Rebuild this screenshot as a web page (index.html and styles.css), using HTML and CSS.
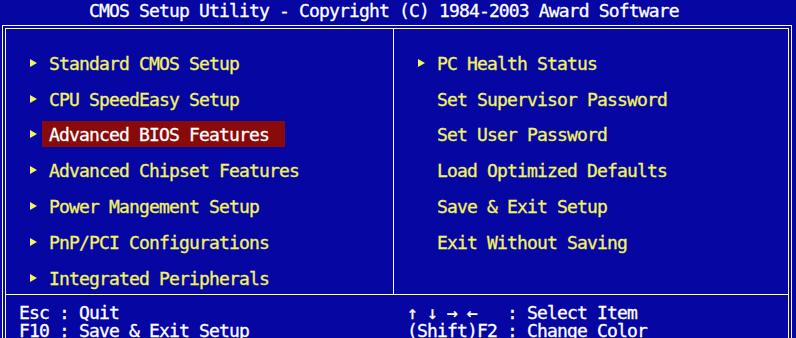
FILE: index.html
```html
<!DOCTYPE html>
<html lang="en">
<head>
    <meta charset="UTF-8">
    <meta name="viewport" content="width=device-width, initial-scale=1.0">
    <title>CMOS Setup Utility</title>
    <link rel="stylesheet" href="styles.css">
</head>
<body>
    <div class="title">CMOS Setup Utility - Copyright (C) 1984-2003 Award Software</div>

    <div class="frame">
        <div class="panel">
            <div class="menus">
                <!-- left menu -->
                <ul class="menu menu-left">
                    <li class="item"><span class="arrow"></span><span class="label">Standard CMOS Setup</span></li>
                    <li class="item"><span class="arrow"></span><span class="label">CPU SpeedEasy Setup</span></li>
                    <li class="item selected"><span class="arrow"></span><span class="label">Advanced BIOS Features</span></li>
                    <li class="item"><span class="arrow"></span><span class="label">Advanced Chipset Features</span></li>
                    <li class="item"><span class="arrow"></span><span class="label">Power Mangement Setup</span></li>
                    <li class="item"><span class="arrow"></span><span class="label">PnP/PCI Configurations</span></li>
                    <li class="item"><span class="arrow"></span><span class="label">Integrated Peripherals</span></li>
                </ul>

                <!-- right menu -->
                <ul class="menu menu-right">
                    <li class="item"><span class="arrow"></span><span class="label">PC Health Status</span></li>
                    <li class="item"><span class="no-arrow"></span><span class="label">Set Supervisor Password</span></li>
                    <li class="item"><span class="no-arrow"></span><span class="label">Set User Password</span></li>
                    <li class="item"><span class="no-arrow"></span><span class="label">Load Optimized Defaults</span></li>
                    <li class="item"><span class="no-arrow"></span><span class="label">Save &amp; Exit Setup</span></li>
                    <li class="item"><span class="no-arrow"></span><span class="label">Exit Without Saving</span></li>
                </ul>
            </div>

            <div class="help">
                <div class="help-col help-left">
                    <div class="key-line">Esc : Quit</div>
                    <div class="key-line">F10 : Save &amp; Exit Setup</div>
                </div>
                <div class="help-col help-right">
                    <div class="key-line">↑ ↓ → ←   : Select Item</div>
                    <div class="key-line">(Shift)F2 : Change Color</div>
                </div>
            </div>
        </div>
    </div>
</body>
</html>
```

FILE: styles.css
```css
* {
    margin: 0;
    padding: 0;
    box-sizing: border-box;
}

body {
    background: #0606a2;
    color: #ffffff;
    font-family: "DejaVu Sans Mono", "Liberation Mono", monospace;
    font-size: 18px;
    letter-spacing: -0.84px;
    -webkit-text-stroke: 0.3px;
    width: 796px;
    height: 338px;
    overflow: hidden;
}

.title {
    height: 25px;
    line-height: 22px;
    padding-left: 89px;
    white-space: pre;
}

.frame {
    margin-left: 2px;
    width: 790px;
    border: 1px solid #ffffff;
    padding: 2px;
}

.panel {
    border: 1px solid #ffffff;
}

.menus {
    display: grid;
    grid-template-columns: 387px 1fr;
    grid-template-rows: 265px;
    height: 265px;
}

.menu {
    list-style: none;
    padding-top: 16px;
    padding-left: 24px;
}

.menu-right {
    border-left: 1px solid #ffffff;
}

.item {
    height: 35.8px;
    display: flex;
    align-items: center;
    color: #f4f460;
    white-space: pre;
}

.arrow,
.no-arrow {
    width: 19px;
    flex-shrink: 0;
}

.arrow::before {
    content: "";
    display: block;
    width: 0;
    height: 0;
    border-left: 7px solid #f4f460;
    border-top: 4px solid transparent;
    border-bottom: 4px solid transparent;
}

.label {
    display: inline-block;
    height: 26px;
    line-height: 27px;
}

.selected .label {
    background: #880a0a;
    color: #ffffff;
    margin-left: -7px;
    padding: 0 16px 0 7px;
}

.help {
    display: grid;
    grid-template-columns: 388px 1fr;
    border-top: 1px solid #ffffff;
    padding-top: 9px;
    line-height: 18px;
}

.key-line {
    white-space: pre;
}

.help-left {
    padding-left: 13px;
}

.help-right {
    padding-left: 13px;
}
```
